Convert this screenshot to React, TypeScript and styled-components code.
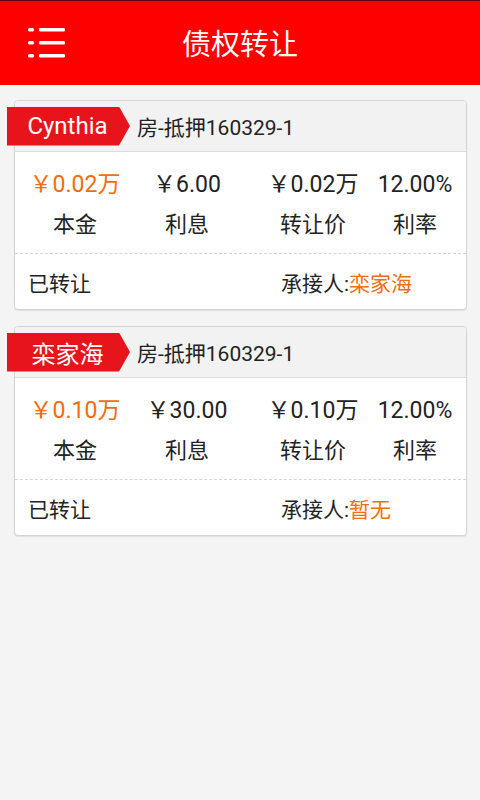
import React from "react";
import styled, { createGlobalStyle } from "styled-components";

const GlobalStyle = createGlobalStyle`
  * { box-sizing: border-box; }
  html, body { margin: 0; padding: 0; }
  body {
    background: #f4f4f4;
    font-family: Roboto, "Noto Sans CJK SC", "Noto Sans", sans-serif;
    color: #222;
  }
`;

const Page = styled.div`
  min-height: 800px;
  background: #f4f4f4;
`;

const Header = styled.header`
  height: 85px;
  background: #ff0000;
  border-top: 1px solid #5a0a0a;
  display: grid;
  grid-template-columns: 1fr auto 1fr;
  align-items: center;
`;

const MenuButton = styled.div`
  padding-left: 28px;
  display: flex;
  align-items: center;
`;

const Title = styled.h1`
  margin: 0;
  font-size: 29px;
  font-weight: 400;
  color: #fff;
  line-height: 34px;
  padding-top: 3px;
`;

const List = styled.main`
  padding: 15px 13px 0 14px;
  display: flex;
  flex-direction: column;
  gap: 16px;
`;

const Card = styled.section`
  background: #fff;
  border: 1px solid #d5d5d5;
  border-radius: 4px;
  box-shadow: 0 1px 1px rgba(0, 0, 0, 0.08);
`;

const CardHead = styled.div`
  height: 51px;
  background: #f2f2f2;
  border-bottom: 1px solid #dcdcdc;
  border-radius: 4px 4px 0 0;
  display: flex;
  align-items: center;
`;

const Tag = styled.div`
  margin-left: -8px;
  width: 123px;
  height: 39px;
  background: #e8141c;
  clip-path: polygon(0 0, 112px 0, 100% 50%, 112px 100%, 0 100%);
  color: #fff;
  font-size: 24px;
  display: flex;
  align-items: center;
  justify-content: center;
  padding-right: 2px;
`;

const LoanName = styled.span`
  margin-left: 7px;
  font-size: 21px;
  color: #222;
`;

const Stats = styled.div`
  display: grid;
  grid-template-columns: 120px 104px 148px 56px;
  padding: 18px 0 13px;
  border-bottom: 1px dashed #d6d6d6;
`;

const Stat = styled.div`
  display: flex;
  flex-direction: column;
  align-items: center;
  gap: 10px;
  white-space: nowrap;
`;

const Value = styled.span<{ $accent?: boolean }>`
  font-size: 23px;
  line-height: 30px;
  color: ${(p) => (p.$accent ? "#f26d0c" : "#222")};
`;

const Label = styled.span`
  font-size: 22px;
  line-height: 30px;
  color: #222;
`;

const Footer = styled.div`
  height: 55px;
  display: grid;
  grid-template-columns: 266px 1fr;
  align-items: center;
  font-size: 21px;
`;

const Status = styled.span`
  padding-left: 13px;
`;

const Receiver = styled.span`
  color: #222;
`;

const Highlight = styled.span`
  color: #f26d0c;
`;

const MenuIcon = () => (
  <svg width="38" height="30" viewBox="0 0 38 30" fill="#fff">
    <rect x="0" y="0" width="6" height="3.4" rx="1.5" />
    <rect x="11" y="0" width="26" height="3.4" rx="1.2" />
    <rect x="0" y="13" width="6" height="3.4" rx="1.5" />
    <rect x="11" y="13" width="26" height="3.4" rx="1.2" />
    <rect x="0" y="26" width="6" height="3.4" rx="1.5" />
    <rect x="11" y="26" width="26" height="3.4" rx="1.2" />
  </svg>
);

type Item = {
  owner: string;
  loan: string;
  principal: string;
  interest: string;
  price: string;
  rate: string;
  status: string;
  receiver: string;
};

const items: Item[] = [
  {
    owner: "Cynthia",
    loan: "房-抵押160329-1",
    principal: "￥0.02万",
    interest: "￥6.00",
    price: "￥0.02万",
    rate: "12.00%",
    status: "已转让",
    receiver: "栾家海",
  },
  {
    owner: "栾家海",
    loan: "房-抵押160329-1",
    principal: "￥0.10万",
    interest: "￥30.00",
    price: "￥0.10万",
    rate: "12.00%",
    status: "已转让",
    receiver: "暂无",
  },
];

export default function App() {
  return (
    <Page>
      <GlobalStyle />
      <Header>
        <MenuButton>
          <MenuIcon />
        </MenuButton>
        <Title>债权转让</Title>
        <div />
      </Header>
      <List>
        {items.map((it, i) => (
          <Card key={i}>
            <CardHead>
              <Tag>{it.owner}</Tag>
              <LoanName>{it.loan}</LoanName>
            </CardHead>
            <Stats>
              <Stat>
                <Value $accent>{it.principal}</Value>
                <Label>本金</Label>
              </Stat>
              <Stat>
                <Value>{it.interest}</Value>
                <Label>利息</Label>
              </Stat>
              <Stat>
                <Value>{it.price}</Value>
                <Label>转让价</Label>
              </Stat>
              <Stat>
                <Value>{it.rate}</Value>
                <Label>利率</Label>
              </Stat>
            </Stats>
            <Footer>
              <Status>{it.status}</Status>
              <Receiver>
                承接人:<Highlight>{it.receiver}</Highlight>
              </Receiver>
            </Footer>
          </Card>
        ))}
      </List>
    </Page>
  );
}
